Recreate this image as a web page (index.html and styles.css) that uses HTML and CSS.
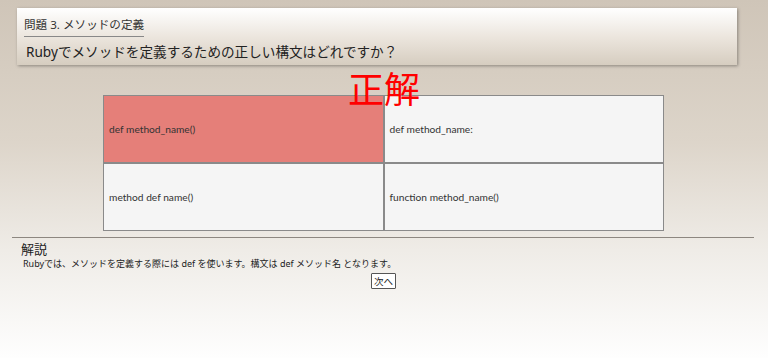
FILE: index.html
```html
<!DOCTYPE html>
<html lang="ja">
<head>
  <meta charset="UTF-8" />
  <title>Ruby クイズ</title>
  <link rel="stylesheet" href="styles.css">
</head>
<body>

<div class="question-card">
  <div class="question-no">問題 3. メソッドの定義</div>
  <div class="question-text">Rubyでメソッドを定義するための正しい構文はどれですか？</div>
</div>

<div class="answer-area">
  <div class="result">正解</div>
  <div class="choices">
    <button class="choice correct">def method_name()</button>
    <button class="choice">def method_name:</button>
    <button class="choice">method def name()</button>
    <button class="choice">function method_name()</button>
  </div>
</div>

<hr class="divider">

<div class="explain">
  <h3>解説</h3>
  <p>Rubyでは、メソッドを定義する際には def を使います。構文は def メソッド名 となります。</p>
  <div class="next-row"><button class="next-btn">次へ</button></div>
</div>

</body>
</html>
```

FILE: styles.css
```css
html {
  min-height: 100%;
  background: linear-gradient(180deg, #cfc5b8 0%, #ddd5ca 40%, #efece7 70%, #fefefe 100%);
}

body {
  margin: 0;
  padding: 8px 12px 0 12px;
  font-family: "Noto Sans", "Noto Sans CJK JP", sans-serif;
  color: #222;
}

.question-card {
  margin: 0 19px 0 5px;
  height: 57px;
  box-sizing: border-box;
  padding: 4px 8px 0 7px;
  background: linear-gradient(180deg, #ffffff 0%, #ece6de 50%, #d6cdc0 100%);
  box-shadow: 1px 1px 3px rgba(0,0,0,0.35);
}

.question-no {
  display: inline-block;
  font-size: 11.6px;
  line-height: 18px;
  padding-bottom: 2px;
  border-bottom: 1px solid #888;
  color: #333;
}

.question-text {
  font-size: 13.6px;
  line-height: 24px;
  margin-top: 3px;
  padding-left: 2px;
  color: #222;
}

.answer-area {
  position: relative;
  padding-top: 30px;
}

.result {
  position: absolute;
  top: 0;
  left: 0;
  right: 0;
  text-align: center;
  color: #ff0000;
  font-size: 36px;
  line-height: 44px;
  font-family: "Noto Sans CJK JP", sans-serif;
  z-index: 1;
}

.choices {
  width: 561px;
  margin: 0 auto 0 91px;
  display: grid;
  grid-template-columns: 1fr 1fr;
}

.choice {
  height: 68px;
  background: #f5f5f5;
  border: 1px solid #8a8a8a;
  text-align: left;
  padding: 0 5px;
  font-family: Lato, "Noto Sans CJK JP", sans-serif;
  font-size: 10.2px;
  color: #333;
}

.choice.correct {
  background: #e57f79;
}

.divider {
  margin: 6px 2px 0 0;
  border: none;
  border-top: 1px solid #8d8780;
}

.explain {
  padding-left: 9px;
}

.explain h3 {
  margin: 3px 0 0 0;
  font-size: 13px;
  line-height: 17px;
  font-weight: normal;
  color: #222;
}

.explain p {
  margin: 0 0 0 2px;
  font-size: 9px;
  line-height: 12px;
  color: #222;
}

.next-row {
  display: flex;
  justify-content: center;
  margin-top: 3px;
  margin-right: 10px;
}

.next-btn {
  font-family: "Noto Sans CJK JP", sans-serif;
  font-size: 9.5px;
  line-height: 12px;
  padding: 1px 2px;
  background: #fff;
  border: 1px solid #555;
  border-radius: 1px;
  color: #222;
}
```
